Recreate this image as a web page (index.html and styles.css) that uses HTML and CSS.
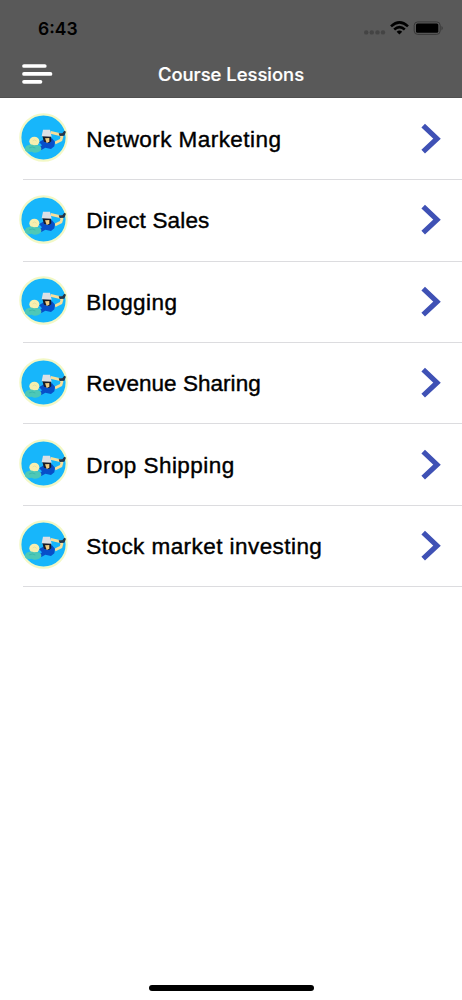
FILE: index.html
```html
<!DOCTYPE html>
<html lang="en">
<head>
<meta charset="utf-8">
<title>Course Lessions</title>
<link rel="stylesheet" href="styles.css">
</head>
<body>
<svg class="defs" aria-hidden="true">
  <symbol id="avatar" viewBox="17 17 147 147">
    <circle cx="90.500" cy="90.500" r="69.500" fill="#17b6fb" stroke="#f3f8c6" stroke-width="6.500"/>
    <path d="M112 75 L141 82 L146 88 L143 98 L125 107" fill="none" stroke="#f8df9a" stroke-width="8" stroke-linejoin="round"/>
    <path d="M136 78 L147 78 L153 70 L158 73 L153 85 L139 86Z" fill="#243548"/>
    <path d="M77 104 Q87 99 92 95 L116 93 L125 103 L123 117 L113 125 L96 121 L84 128 L77 121 L86 114Z" fill="#074fc9"/>
    <path d="M87 86 L113 86 L114 102 L107 107 L92 103Z" fill="#181a27"/>
    <path d="M95 93 L108 92 L108 103 L100 107Z" fill="#f0cc83"/>
    <path d="M89 67 L110 67 L115 88 L85 87Z" fill="#dce0e5"/>
    <ellipse cx="63" cy="102" rx="15" ry="14" fill="#f7efaf"/>
    <path d="M58 101 Q64 94 70 102" fill="none" stroke="#dfdd9f" stroke-width="2"/>
    <path d="M35 127 Q34 116 44 114 Q53 109 62 114 Q76 110 83 119 Q87 129 77 133 Q64 139 55 133 Q38 136 35 127Z" fill="#4dc8b7"/>
    <path d="M47 122 Q57 116 66 122" fill="none" stroke="#35b0a5" stroke-width="2"/>
  </symbol>
  <symbol id="chevron" viewBox="0 0 20 32">
    <path d="M2.200 2.700 L16 15.700 L2.200 28.700" fill="none" stroke="#3f51b5" stroke-width="5.200"/>
  </symbol>
</svg>
<header class="header">
  <div class="status">
    <span class="time">6:43</span>
    <svg class="indicators" width="80" height="18" viewBox="0 0 80 18">
      <g fill="#444"><circle cx="3.200" cy="12.400" r="2.200"/><circle cx="8.800" cy="12.400" r="2.200"/><circle cx="14.500" cy="12.400" r="2.200"/><circle cx="20" cy="12.400" r="2.200"/></g>
      <g fill="none" stroke="#000" stroke-width="2.600"><path d="M28 6.400 Q36.500 -1.500 45 6.400"/><path d="M31.200 9.500 Q36.500 4.800 41.800 9.500"/></g>
      <path d="M33.600 11.700 Q36.500 9.300 39.200 11.700 L36.400 14.500Z"/>
      <rect x="51.200" y="1.900" width="26" height="12.500" rx="3.500" fill="none" stroke="#383838"/>
      <rect x="53" y="3.600" width="22.300" height="9.200" rx="1.500"/>
      <path d="M78.500 6 Q81 8.200 78.500 10.400Z" fill="#383838"/>
    </svg>
  </div>
  <div class="nav">
    <svg class="menu" width="31" height="20" viewBox="0 0 31 20" fill="none" stroke="#fff" stroke-width="3.700" stroke-linecap="round"><path d="M2 2H22.800M2 9.900H28.500M2 17.800H18.500"/></svg>
    <h1 class="title">Course Lessions</h1>
  </div>
</header>
<main class="list">
  <div class="row"><svg class="avatar"><use href="#avatar"/></svg><span class="label">Network Marketing</span><svg class="chevron"><use href="#chevron"/></svg></div>
  <div class="row"><svg class="avatar"><use href="#avatar"/></svg><span class="label label-snug">Direct Sales</span><svg class="chevron"><use href="#chevron"/></svg></div>
  <div class="row"><svg class="avatar"><use href="#avatar"/></svg><span class="label">Blogging</span><svg class="chevron"><use href="#chevron"/></svg></div>
  <div class="row"><svg class="avatar"><use href="#avatar"/></svg><span class="label label-tight">Revenue Sharing</span><svg class="chevron"><use href="#chevron"/></svg></div>
  <div class="row"><svg class="avatar"><use href="#avatar"/></svg><span class="label">Drop Shipping</span><svg class="chevron"><use href="#chevron"/></svg></div>
  <div class="row"><svg class="avatar"><use href="#avatar"/></svg><span class="label">Stock market investing</span><svg class="chevron"><use href="#chevron"/></svg></div>
</main>
<footer class="footer"><div class="home"></div></footer>
</body>
</html>
```
FILE: styles.css
```css
* { box-sizing: border-box; }
body {
  margin: 0;
  height: 1000px;
  display: flex;
  flex-direction: column;
  background: #fff;
  overflow: hidden;
}
.defs { position: absolute; width: 0; height: 0; }
.header {
  height: 98.400px;
  flex: none;
  background: #595959;
  border-bottom: 1px solid #505050;
  font-family: Inter, sans-serif;
}
.status {
  height: 50px;
  padding: 8px 19.500px 0 38px;
  display: flex;
  justify-content: space-between;
  align-items: center;
}
.time {
  font-size: 17.500px;
  line-height: 22px;
  font-weight: 600;
}
.indicators { overflow: visible; }
.nav {
  height: 47px;
  display: grid;
  grid-template-columns: 88px 1fr 88px;
  align-items: center;
}
.menu { margin: 0 0 0 22px; }
.title {
  margin: 0;
  text-align: center;
  color: #fff;
  font-size: 18.400px;
  line-height: 24px;
  font-weight: 500;
  -webkit-text-stroke: 0.200px #fff;
  white-space: nowrap;
}
.list { flex: 1; padding-top: 0.400px; }
.row {
  height: 81.400px;
  margin-left: 22.500px;
  padding-right: 21.500px;
  border-bottom: 1px solid #dcdcdf;
  display: flex;
  align-items: center;
}
.avatar {
  width: 49px;
  height: 49px;
  margin: -2px 18.300px 0 -3.500px;
  flex: none;
}
.label {
  flex: 1;
  color: #000;
  font: 22.500px/26px "Liberation Sans", Arial, sans-serif;
  letter-spacing: 0.440px;
  -webkit-text-stroke: 0.400px #000;
  padding-top: 2px;
}
.label-snug { letter-spacing: 0.160px; }
.label-tight { letter-spacing: 0.040px; }
.chevron { width: 20px; height: 32px; flex: none; }
.footer { height: 15px; display: flex; justify-content: center; }
.home { width: 165px; height: 5.500px; border-radius: 3px; background: #000; }
```
